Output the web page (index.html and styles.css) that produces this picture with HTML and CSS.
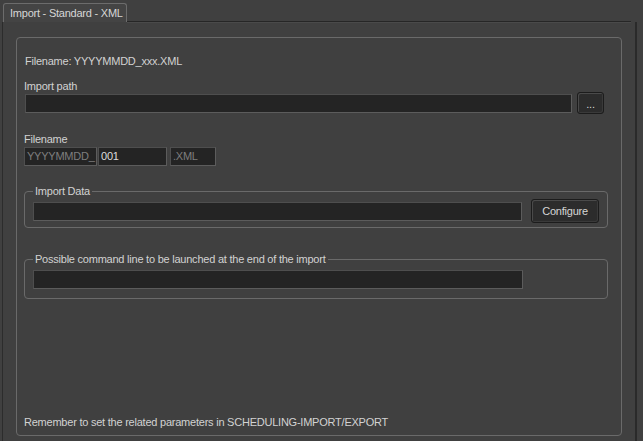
FILE: index.html
```html
<!DOCTYPE html>
<html>
<head>
<meta charset="utf-8">
<link rel="stylesheet" href="styles.css">
</head>
<body>
<div class="window">
  <div class="tabbar">
    <div class="tab">Import - Standard - XML</div>
    <div class="tabfill"></div>
  </div>
  <div class="pane">
    <div class="box">
      <div class="line title">Filename: YYYYMMDD_xxx.XML</div>
      <div class="line label l-path">Import path</div>
      <div class="row">
        <div class="input path"></div>
        <div class="btn small">...</div>
      </div>
      <div class="line label l-file">Filename</div>
      <div class="row files">
        <div class="input f1 dim">YYYYMMDD_</div>
        <div class="input f2">001</div>
        <div class="input f3 dim">.XML</div>
      </div>
      <fieldset class="group g-data">
        <legend>Import Data</legend>
        <div class="row data">
          <div class="input wide"></div>
          <div class="btn cfg">Configure</div>
        </div>
      </fieldset>
      <fieldset class="group g-cmd">
        <legend>Possible command line to be launched at the end of the import</legend>
        <div class="input wide"></div>
      </fieldset>
      <div class="line footer">Remember to set the related parameters in SCHEDULING-IMPORT/EXPORT</div>
    </div>
  </div>
</div>
</body>
</html>
```

FILE: styles.css
```css
html, body {
  margin: 0;
  padding: 0;
  background: #404040;
}
body {
  font-family: "Liberation Sans", Arial, sans-serif;
  font-size: 11px;
  line-height: 13px;
  letter-spacing: -0.23px;
  color: #d2d2d2;
  width: 643px;
  height: 441px;
  overflow: hidden;
}
.window {
  padding-top: 3px;
  height: 438px;
  display: flex;
  flex-direction: column;
}
.tabbar {
  display: flex;
  height: 19px;
  align-items: stretch;
}
.tab {
  margin-left: 3px;
  width: 124px;
  border: 1px solid #6c6c6c;
  border-bottom: none;
  border-radius: 3px 3px 0 0;
  background: #444444;
  padding: 3px 0 0 6px;
  box-sizing: border-box;
  white-space: nowrap;
  color: #d6d6d6;
}
.tabfill {
  width: 504px;
  border-bottom: 1px solid #262626;
  box-shadow: 0 1px 0 #4a4a4a;
}
.pane {
  flex: 1;
  margin-left: 2px;
  width: 635px;
  border-left: 1px solid #2c2c2c;
  border-right: 2px solid #2a2a2a;
  padding: 15px 0 0 13px;
  box-sizing: border-box;
}
.box {
  width: 606px;
  height: 399px;
  box-sizing: border-box;
  border: 1px solid #6a6a6a;
  border-radius: 4px;
  padding: 17px 0 6px 7px;
  display: flex;
  flex-direction: column;
}
.title { margin-left: 1px; }
.l-path { margin-top: 12px; }
.l-file { margin-top: 19px; }
.label { margin-bottom: -1px; }
.row {
  display: flex;
  align-items: center;
}
.input {
  background: #242424;
  border: 1px solid #5c5c5c;
  border-top-color: #4e4e4e;
  border-left-color: #4e4e4e;
  height: 19px;
  box-sizing: border-box;
  padding: 2px 2px 0;
  color: #dcdcdc;
}
.input.dim { color: #7e7e7e; }
.path {
  width: 547px;
  margin-left: 1px;
}
.btn {
  box-sizing: border-box;
  background: #2c2c2c;
  border: 1px solid #1c1c1c;
  box-shadow: inset 1px 1px 0 #4a4a4a, inset -1px -1px 0 #3a3a3a;
  border-radius: 3px;
  color: #d6d6d6;
  display: flex;
  align-items: center;
  justify-content: center;
}
.small {
  width: 27px;
  height: 22px;
  margin-left: 5px;
  padding-top: 3px;
}
.files { margin-top: 2px; }
.files .f1 { width: 73px; }
.files .f2 { width: 69px; margin-left: 1px; }
.files .f3 { width: 46px; margin-left: 3px; }
.group {
  margin: 0;
  border: 1px solid #6a6a6a;
  border-radius: 4px;
  width: 584px;
  box-sizing: border-box;
  padding: 0 8px;
  min-width: 0;
}
.group legend {
  padding: 0 2px;
  color: #d2d2d2;
}
.g-data {
  margin-top: 19px;
  padding-top: 1px;
  padding-bottom: 4px;
}
.g-cmd {
  margin-top: 25px;
  padding-top: 4px;
  padding-bottom: 9px;
}
.wide { width: 490px; }
.cfg {
  width: 68px;
  height: 24px;
  margin-left: 9px;
}
.footer {
  margin-top: auto;
}
```
